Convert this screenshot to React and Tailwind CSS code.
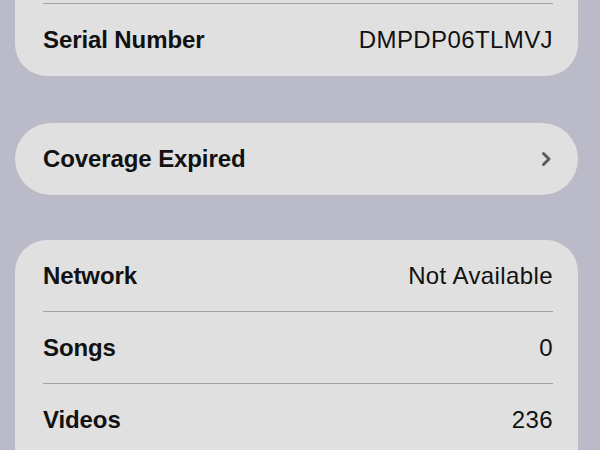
const font = { fontFamily: '"Liberation Sans", Arial, sans-serif' };

function Row({ label, value, last = false, chevron = false }) {
  return (
    <div className="ml-[28px] mr-[25px]">
      <div
        className={`flex h-[72px] items-center justify-between ${
          last ? "" : "border-b border-[#a3a3a6]"
        }`}
      >
        <span className="text-[24px] font-bold tracking-[-0.1px] text-[#111]">{label}</span>
        {chevron ? (
          <svg width="12" height="18" viewBox="0 0 12 18" className="mr-[1px]">
            <path d="M3.5 3.5 L9 9 L3.5 14.5" fill="none" stroke="#5c5c60" strokeWidth="3" strokeLinecap="round" strokeLinejoin="round" />
          </svg>
        ) : (
          <span className="text-[24px] font-normal tracking-[0.4px] text-[#111]">{value}</span>
        )}
      </div>
    </div>
  );
}

export default function App() {
  return (
    <div className="h-[450px] w-[600px] overflow-hidden bg-[#bbbac9]" style={font}>
      <div className="flex flex-col pl-[15px] pr-[22px]">
        <div className="overflow-hidden rounded-b-[32px] bg-[#e0e0e0]">
          <div className="ml-[28px] mr-[25px] h-[4px] border-b border-[#a3a3a6]" />
          <Row label="Serial Number" value="DMPDP06TLMVJ" last />
        </div>
        <div className="mt-[47px] overflow-hidden rounded-[36px] bg-[#e0e0e0]">
          <Row label="Coverage Expired" chevron last />
        </div>
        <div className="mt-[45px] overflow-hidden rounded-t-[32px] bg-[#e0e0e0] pb-[20px]">
          <Row label="Network" value="Not Available" />
          <Row label="Songs" value="0" />
          <Row label="Videos" value="236" last />
        </div>
      </div>
    </div>
  );
}
